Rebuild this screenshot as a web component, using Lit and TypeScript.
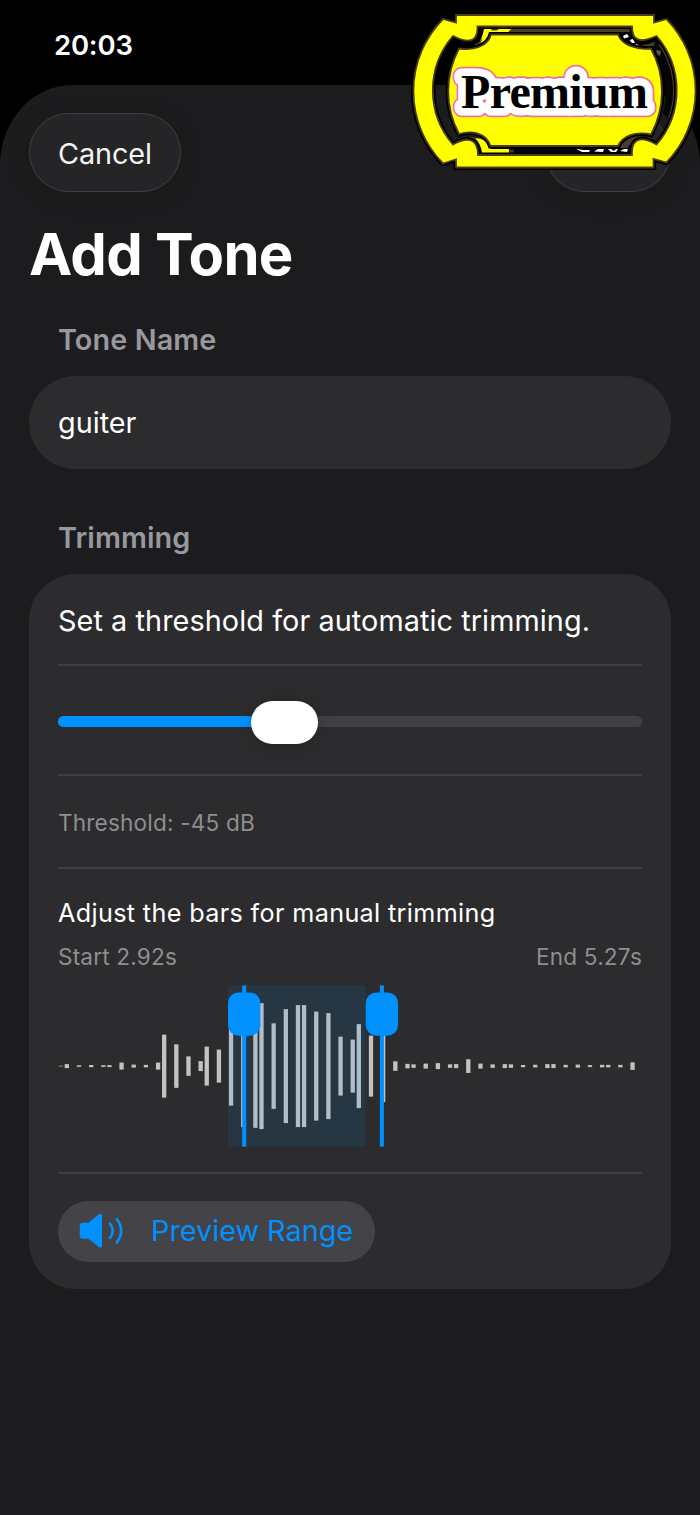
import { html, css, svg, LitElement } from 'lit';
import { customElement, property } from 'lit/decorators.js';

// [slot, height] for every visible sample
const SAMPLES: [number, number][] = [
  [0, 0.6], [1, 4], [3, 1.5], [5, 2.2], [7, 1.7], [8, 2], [10, 7], [12, 3],
  [14, 2.5], [16, 7], [17, 63], [19, 43.5], [21, 19.5], [23, 10], [24, 39],
  [26, 33], [28, 79], [30, 122], [32, 123.5], [33, 126], [35, 85.5],
  [37, 114], [39, 122], [40, 122], [42, 109], [44, 106], [46, 59], [48, 53],
  [49, 84], [51, 61], [53, 72], [55, 9.5], [57, 4.5], [58, 3.5], [60, 5],
  [62, 6], [64, 3.5], [65, 4], [67, 13.7], [69, 5], [71, 3.5], [73, 4],
  [74, 3.5], [76, 2.2], [78, 2.7], [80, 4], [81, 4], [83, 2.5], [85, 3],
  [87, 2], [89, 2.5], [90, 2.5], [92, 2.5], [94, 7.5],
];
const SLOT = 6.083;

@customElement('trim-waveform')
export class TrimWaveform extends LitElement {

  static styles = [
    css`
      :host {
        display: block;
        height: 162px;
      }

      svg {
        display: block;
        overflow: visible;
      }
    `
  ];

  @property({ type: Number }) start = 186.2;
  @property({ type: Number }) end = 323.9;

  handle(x: number) {
    return svg`
      <rect x=${x - 2} y="0.4" width="4" height="161.3" fill="#0091ff"></rect>
      <rect x=${x - 16.2} y="7.5" width="32.4" height="43.2" rx="10.5" fill="#0091ff"></rect>
    `;
  }

  render() {
    return html`
      <svg width="584" height="162" viewBox="0 0 584 162">
        ${SAMPLES.map(([slot, h]) => svg`
          <rect x=${0.6 + slot * SLOT} y=${81.1 - h / 2} width="4.3" height=${h} fill="#c4c3c3"></rect>
        `)}
        <rect x=${this.start - 16.2} y="0.4" width=${this.end - this.start} height="161.3" fill="#0091ff" opacity="0.1"></rect>
        ${this.handle(this.start)}
        ${this.handle(this.end)}
      </svg>
    `;
  }
}

@customElement('premium-badge')
export class PremiumBadge extends LitElement {

  static styles = [
    css`
      :host {
        display: block;
      }

      svg {
        display: block;
      }

      .label {
        font: bold 48px 'Liberation Serif', serif;
      }
    `
  ];

  render() {
    const frame = `M46 5 H244 V12.5 L256.5 9 A103 103 0 0 1 256.5 152.5 L243.5 149 V157.5 H46 V149.5
      L33 153.5 A103 103 0 0 1 33 9 L46 12.5 Z
      M43 26 A83 83 0 0 0 43 134.5 C56 127 68 127 68 145 H222
      C221 127 232 126 246.5 134.5 A83 83 0 0 0 246.5 26 C231 33 222 32 222 16.5 H67.5 C68 32 59 34 43 26 Z`;
    const plate = `M49 38.5 C64 41 78 36 81 24.5 H208 C212 35 226 40 241 38.5 A90 90 0 0 1 241 124.5
      C225 121 213 126 208 136 H80.5 C76 123 62 120 49 124 A90 90 0 0 1 49 38.5 Z`;

    return html`
      <svg width="290" height="162" viewBox="0 0 290 162">
        <path d="M70 17 H221 V26 H70 Z" fill="#000"></path>
        <path d="M98 18.3 H220 V22 H98 Z" fill="#4b3d2b"></path>
        <path d="M74 19 H101 L98 22.3 H85 Q78 31 68 35 Q72 29 74 19 Z" fill="#ff0"></path>
        <path d="M80 18 H90 L87 20.5 H82 Z M62 36 Q70 32 73 28 L69 36 Z" fill="#4b3d2b"></path>
        <path d="M44 30 L60 33 L66 36 L48 40 Z" fill="#000"></path>
        <path d="M210 22 L222 22 Q226 32 247 28 L256 45 L244 39 Q220 40 210 26 Z" fill="#000"></path>
        <path d="M230 35 Q240 35 247 30 L250 34 L243 38 Z" fill="#4b3d2b"></path>
        <path d="M246 28 A82 82 0 0 1 260 110 L253 104 A90 90 0 0 0 243 38 Z" fill="#050505"></path>
        <path d="M249 34 A80 80 0 0 1 259 108" fill="none" stroke="#4b3d2b" stroke-width="1.6"></path>
        <path d="M246 40 L251 41 L250 46 L247 44 Z" fill="#58585a"></path>
        <path d="M213 26 L217 24 L219 27 L214 28.5 Z M219.5 30 L223 29 L225 33 L222 33 Z M225 34 L229 35 L227 36 Z" fill="#fff"></path>
        <path d="M70 136 H220 V145 H70 Z" fill="#000"></path>
        <path d="M65 128 Q77 128 81 139 H99 V143 H72 Q71 134 65 128 Z" fill="#ff0"></path>
        <path d="M99.500 139.500 H103.500 V143 H99.500 Z M59 127 L64 127 L68 132 Z" fill="#4b3d2b"></path>
        <path d="M165.500 138.500 L173 140 L180 140 L179 142 H172 Z M184 141.500 L188 139 H194 L193 142 Z M198 139 H201 L204 141 L206 139 H208 L206 142 H201 Z M210 141 L214 139 H218 L217 142 Z" fill="#fff"></path>
        <path d="M210 138 Q214 126 230 126 L224 130 Q219 133 218 138 Z" fill="#4b3d2b"></path>
        <path d=${frame} fill="none" stroke="#000" stroke-width="5.2"></path>
        <path d=${frame} fill="#ff0" fill-rule="evenodd" stroke="#4a3d1c" stroke-width="1.8"></path>
        <path d=${plate} fill="none" stroke="#000" stroke-width="5.2"></path>
        <path d=${plate} fill="#ff0" stroke="#4a3d1c" stroke-width="1.8"></path>
        <g class="label" stroke-linejoin="round">
          <text x="51" y="97.5" textLength="187" fill="#f469a9" stroke="#f469a9" stroke-width="18.5" aria-hidden="true">Premium</text>
          <text x="51" y="97.5" textLength="187" fill="#fff" stroke="#fff" stroke-width="15.2" aria-hidden="true">Premium</text>
          <path d="M72 90.5 L76.500 89 L75 93.500 Z" fill="#f469a9"></path>
          <text x="51" y="97.5" textLength="187" fill="#000">Premium</text>
        </g>
      </svg>
    `;
  }
}

@customElement('app-root')
export class AppRoot extends LitElement {

  static styles = [
    css`
      :host {
        display: block;
        position: relative;
        width: 700px;
        height: 1515px;
        overflow: hidden;
        background: #000;
        color: #fff;
        font-family: Inter, 'Liberation Sans', sans-serif;
        font-size: 28.8px;
        line-height: 36px;
        white-space: nowrap;
      }

      .status {
        box-sizing: border-box;
        height: 85px;
        padding: 27px 0 0 54px;
        font-size: 27.5px;
        font-weight: 600;
        letter-spacing: -0.2px;
      }

      .sheet {
        box-sizing: border-box;
        height: 1430px;
        padding: 28px 29px 0;
        border-radius: 72px 72px 0 0 / 80px 80px 0 0;
        background: #1c1c1e;
      }

      .toolbar {
        display: flex;
        justify-content: space-between;
      }

      .pill {
        box-sizing: border-box;
        width: 152px;
        height: 79px;
        padding: 2px 0 0;
        border: 1.5px solid #414144;
        border-radius: 40px;
        background: #252527;
        box-shadow: 0 4px 26px rgba(0, 0, 0, 0.12);
        color: #f4f4f4;
        font: inherit;
        letter-spacing: -0.1px;
      }

      .pill.save {
        width: 126px;
      }

      h1 {
        margin: 27px 0 0;
        font-size: 58px;
        line-height: 70px;
        font-weight: 700;
        letter-spacing: -0.7px;
      }

      h2 {
        margin: 0 0 0 29px;
        font-size: 28.8px;
        line-height: 36px;
        font-weight: 600;
        letter-spacing: 0.1px;
        color: #98989f;
      }

      h2.name {
        margin-top: 33px;
      }

      h2.trim {
        margin-top: 51px;
      }

      .field {
        box-sizing: border-box;
        display: flex;
        align-items: center;
        height: 93px;
        margin-top: 18px;
        padding: 1px 29px 0;
        border-radius: 47px;
        background: #2c2c2e;
      }

      .card {
        box-sizing: border-box;
        height: 714.5px;
        margin-top: 18px;
        padding: 0 29px;
        border-radius: 47px;
        background: #2c2c2e;
      }

      .row {
        box-sizing: border-box;
        display: flex;
        align-items: center;
        border-bottom: 2px solid #3f3f41;
      }

      .intro {
        height: 92px;
        padding-top: 3px;
        letter-spacing: 0.08px;
      }

      .slider {
        height: 110px;
      }

      .track {
        position: relative;
        width: 100%;
        height: 11px;
        margin-top: 2px;
        border-radius: 6px;
        background: #414143;
      }

      .fill {
        height: 100%;
        border-radius: 6px;
        background: #0091ff;
      }

      .thumb {
        position: absolute;
        top: -15px;
        width: 67px;
        height: 43px;
        margin-left: -33.5px;
        border-radius: 22px;
        background: #fff;
        box-shadow: 0 2px 18px rgba(0, 0, 0, 0.2);
      }

      .note {
        color: #8e8e90;
        font-size: 22.6px;
        line-height: 30px;
        letter-spacing: 0.18px;
      }

      .threshold {
        height: 93px;
        padding-top: 2px;
      }

      .manual {
        display: block;
        height: 305px;
        padding-top: 28px;
      }

      .manual-title {
        font-size: 25.2px;
        line-height: 32px;
        letter-spacing: 0.35px;
      }

      .times {
        display: flex;
        justify-content: space-between;
        margin: 13px 0;
      }

      .preview {
        display: flex;
        align-items: center;
        width: 317px;
        height: 61px;
        margin-top: 26.5px;
        padding: 0 0 0 20px;
        border: 0;
        border-radius: 31px;
        background: #444347;
        color: #0091ff;
        font: inherit;
      }

      .preview svg {
        width: 46px;
        margin-right: 27px;
      }

      .badge {
        position: absolute;
        top: 10px;
        left: 410px;
      }
    `
  ];

  @property({ type: Number }) threshold = 38.8;

  render() {
    return html`
      <div class="status">20:03</div>
      <main class="sheet">
        <div class="toolbar">
          <button type="button" class="pill">Cancel</button>
          <button type="button" class="pill save">Save</button>
        </div>
        <h1>Add Tone</h1>
        <h2 class="name">Tone Name</h2>
        <div class="field"><span>guiter</span></div>
        <h2 class="trim">Trimming</h2>
        <section class="card">
          <div class="row intro"><span>Set a threshold for automatic trimming.</span></div>
          <div class="row slider">
            <div class="track">
              <div class="thumb" style="left: ${this.threshold}%"></div>
              <div class="fill" style="width: ${this.threshold}%"></div>
            </div>
          </div>
          <div class="row threshold note"><span>Threshold: -45 dB</span></div>
          <div class="row manual">
            <div class="manual-title"><span>Adjust the bars for manual trimming</span></div>
            <div class="times note"><span>Start 2.92s</span><span>End 5.27s</span></div>
            <trim-waveform></trim-waveform>
          </div>
          <button type="button" class="preview">
            <svg height="36" viewBox="0 0 46 36">
              <path d="M5 9.8 H10.5 L20.5 1.6 Q24 -0.4 24 3 V32.5 Q24 36 20.5 33.8 L10.5 25.8 H5 Q1.7 25.8 1.7 22.5 V13 Q1.7 9.8 5 9.8 Z" fill="currentColor"></path>
              <path d="M32 10.7 Q37.500 17.8 32 25 M38.8 6 Q47.500 17.8 38.8 29.6" fill="none" stroke="currentColor" stroke-width="2.6" stroke-linecap="round"></path>
            </svg>
            <span>Preview Range</span>
          </button>
        </section>
      </main>
      <premium-badge class="badge"></premium-badge>
    `;
  }
}

declare global {
  interface HTMLElementTagNameMap {
    'app-root': AppRoot;
    'trim-waveform': TrimWaveform;
    'premium-badge': PremiumBadge;
  }
}
